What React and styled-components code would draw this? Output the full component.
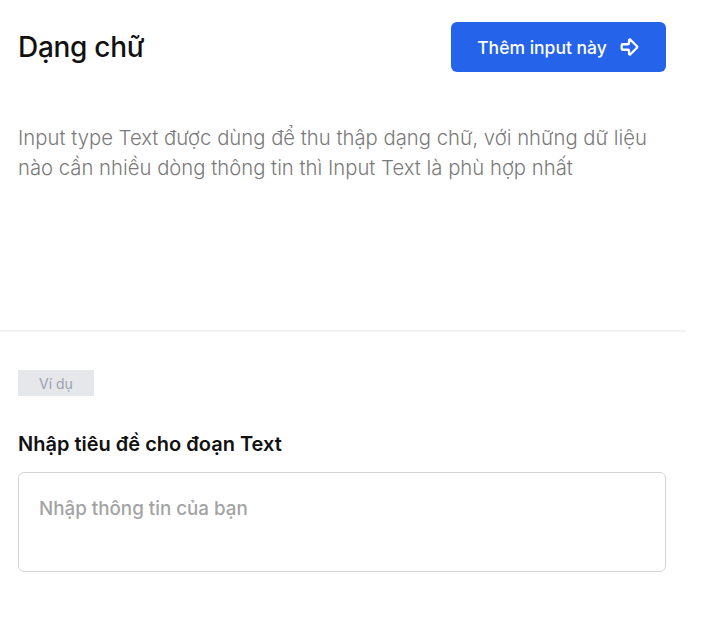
import styled, { createGlobalStyle } from "styled-components";
import { ArrowBigRight } from "lucide-react";

const GlobalStyle = createGlobalStyle`
  body {
    margin: 0;
    background: #ffffff;
    font-family: Inter, "Noto Sans", sans-serif;
  }
`;

const Container = styled.div`
  width: 686px;
  display: flex;
  flex-direction: column;
`;

const InfoSection = styled.section`
  height: 332px;
  box-sizing: border-box;
  padding: 22px 20px 0 18px;
  border-bottom: 2px solid #f3f3f3;
`;

const Header = styled.div`
  display: flex;
  justify-content: space-between;
  align-items: center;
`;

const Title = styled.h1`
  margin: 0;
  font-size: 28px;
  font-weight: 500;
  color: #111111;
  letter-spacing: -0.3px;
`;

const AddButton = styled.button`
  height: 50px;
  width: 215px;
  display: flex;
  justify-content: center;
  align-items: center;
  gap: 11px;
  background-color: #2563eb;
  color: #ffffff;
  border: 0;
  border-radius: 6px;
  font-family: inherit;
  font-size: 17.5px;
  font-weight: 500;
  cursor: pointer;
`;

const Description = styled.p`
  margin: 51px 0 0;
  font-size: 20.3px;
  font-weight: 300;
  line-height: 30px;
  color: #7a7a7a;
`;

const ExampleSection = styled.section`
  padding: 38px 20px 0 18px;
  display: flex;
  flex-direction: column;
  align-items: flex-start;
`;

const Badge = styled.span`
  height: 26px;
  padding: 0 21px;
  display: inline-flex;
  align-items: center;
  background: #e5e7eb;
  color: #9ca3af;
  font-size: 14px;
`;

const FieldLabel = styled.label`
  margin-top: 36px;
  font-size: 20px;
  line-height: 24px;
  font-weight: 600;
  color: #111111;
`;

const TextArea = styled.textarea`
  margin-top: 16px;
  width: 100%;
  height: 100px;
  box-sizing: border-box;
  padding: 25px 20px;
  border: 1px solid #d4d4d8;
  border-radius: 6px;
  font-family: inherit;
  font-size: 18.8px;
  line-height: 22px;
  font-weight: 500;
  resize: none;
  outline: none;

  &::placeholder {
    color: #a3a3a3;
  }
`;

export default function App() {
  return (
    <Container>
      <GlobalStyle />
      <InfoSection>
        <Header>
          <Title>Dạng chữ</Title>
          <AddButton>
            Thêm input này
            <ArrowBigRight size={22} strokeWidth={2.5} />
          </AddButton>
        </Header>
        <Description>
          Input type Text được dùng để thu thập dạng chữ, với những dữ liệu
          nào cần nhiều dòng thông tin thì Input Text là phù hợp nhất
        </Description>
      </InfoSection>
      <ExampleSection>
        <Badge>Ví dụ</Badge>
        <FieldLabel>Nhập tiêu đề cho đoạn Text</FieldLabel>
        <TextArea placeholder="Nhập thông tin của bạn" />
      </ExampleSection>
    </Container>
  );
}
